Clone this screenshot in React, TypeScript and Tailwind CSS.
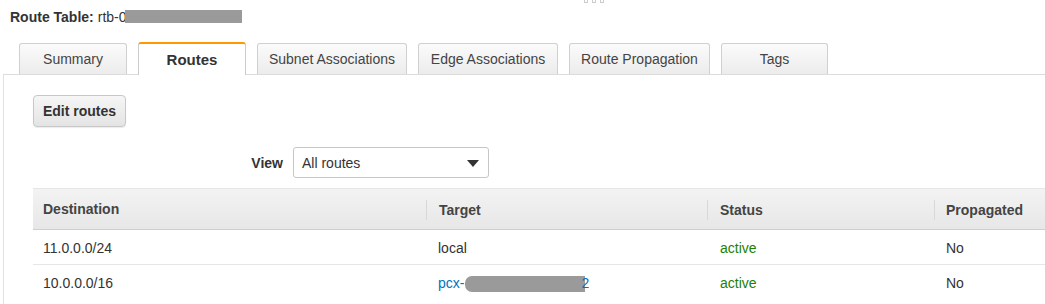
import React from 'react';

const tabs = [
  { label: 'Summary', w: 'w-[108px]' },
  { label: 'Routes', w: 'w-[108px]', active: true },
  { label: 'Subnet Associations', w: 'w-[150px]' },
  { label: 'Edge Associations', w: 'w-[140px]' },
  { label: 'Route Propagation', w: 'w-[141px]' },
  { label: 'Tags', w: 'w-[107px]' },
];

function Redacted({ className }: { className: string }) {
  return <span className={`inline-block bg-[#9a9a9a] align-middle ${className}`} />;
}

export default function App() {
  return (
    <div className="relative w-[1045px] h-[304px] overflow-hidden bg-white text-[14px] text-[#333] font-['Liberation_Sans',Arial,sans-serif]">
      {/* drag handle */}
      <div className="absolute top-0 left-[584px] flex gap-[4px]">
        <span className="w-[4px] h-[3px] border border-[#ccc] border-t-0" />
        <span className="w-[4px] h-[3px] border border-[#ccc] border-t-0" />
        <span className="w-[4px] h-[3px] border border-[#ccc] border-t-0" />
      </div>

      {/* Header */}
      <div className="h-[43px] pl-[10px] pt-[8px] leading-[18px] flex items-start">
        <span className="font-bold">Route Table:</span>
        <span className="ml-[4px]">rtb-0</span>
        <Redacted className="w-[117px] h-[13px] mt-[2px] -ml-[2px]" />
      </div>

      <div className="ml-[3px]">
        {/* Tabs */}
        <div className="flex items-end gap-[11px] pl-[16px] h-[32px] border-b border-[#dcdcdc]">
          {tabs.map((t) =>
            t.active ? (
              <div
                key={t.label}
                className={`${t.w} h-[33px] -mb-px bg-white border-x border-[#ccc] border-t-2 border-t-[#f90] rounded-t-[3px] flex items-center justify-center font-bold text-[15px] text-[#333] pt-[2px]`}
              >
                {t.label}
              </div>
            ) : (
              <div
                key={t.label}
                className={`${t.w} h-[31px] bg-gradient-to-b from-[#fbfbfb] to-[#ececec] border border-b-0 border-[#d0d0d0] rounded-t-[3px] flex items-center justify-center text-[#444]`}
              >
                {t.label}
              </div>
            )
          )}
        </div>

        {/* Panel */}
        <div className="border-l border-[#e2e2e2] pl-[29px] pt-[20px] h-[240px]">
          <button className="w-[93px] h-[32px] rounded-[4px] border border-[#c8c8c8] bg-gradient-to-b from-[#f6f6f6] to-[#e4e4e4] font-bold text-[#333] shadow-[0_1px_1px_rgba(0,0,0,0.08)]">
            Edit routes
          </button>

          <div className="flex items-center mt-[20px]">
            <div className="w-[250px] text-right font-bold text-[#333] pt-[2px]">View</div>
            <div className="ml-[10px] w-[196px] h-[31px] border border-[#c6c6c6] rounded-[3px] bg-white flex items-center justify-between pl-[8px] pr-[9px] pt-[2px]">
              <span className="text-[#333]">All routes</span>
              <svg width="12" height="7" viewBox="0 0 12 7">
                <path d="M0 0 H12 L6 7 Z" fill="#333" />
              </svg>
            </div>
          </div>

          {/* Table */}
          <div className="mt-[10px] border-t border-[#e6e6e6]">
            <div className="flex h-[41px] items-center bg-gradient-to-b from-[#f3f3f3] to-[#e7e7e7] border-b border-[#cfcfcf] font-bold text-[#444] pt-[1px]">
              <div className="w-[393px] pl-[10px]">Destination</div>
              <div className="w-[281px] pl-[12px] border-l border-[#d8d8d8] leading-[20px]">Target</div>
              <div className="w-[227px] pl-[12px] border-l border-[#d8d8d8] leading-[20px]">Status</div>
              <div className="flex-1 pl-[11px] border-l border-[#d8d8d8] leading-[20px]">Propagated</div>
            </div>
            <div className="flex h-[35px] items-center border-b border-[#e6e6e6] text-[#333] pt-[3px]">
              <div className="w-[393px] pl-[10px]">11.0.0.0/24</div>
              <div className="w-[281px] pl-[12px]">local</div>
              <div className="w-[227px] pl-[13px] text-[#1d8102]">active</div>
              <div className="flex-1 pl-[12px]">No</div>
            </div>
            <div className="flex h-[35px] items-center text-[#333] pt-[2px]">
              <div className="w-[393px] pl-[10px]">10.0.0.0/16</div>
              <div className="w-[281px] pl-[12px] text-[#0073bb] flex items-center">
                <span>pcx-</span>
                <Redacted className="w-[120px] h-[16px] ml-[1px] rounded-l-[7px]" />
                <span className="-ml-[4px]">2</span>
              </div>
              <div className="w-[227px] pl-[13px] text-[#1d8102]">active</div>
              <div className="flex-1 pl-[12px]">No</div>
            </div>
          </div>
        </div>
      </div>
    </div>
  );
}
